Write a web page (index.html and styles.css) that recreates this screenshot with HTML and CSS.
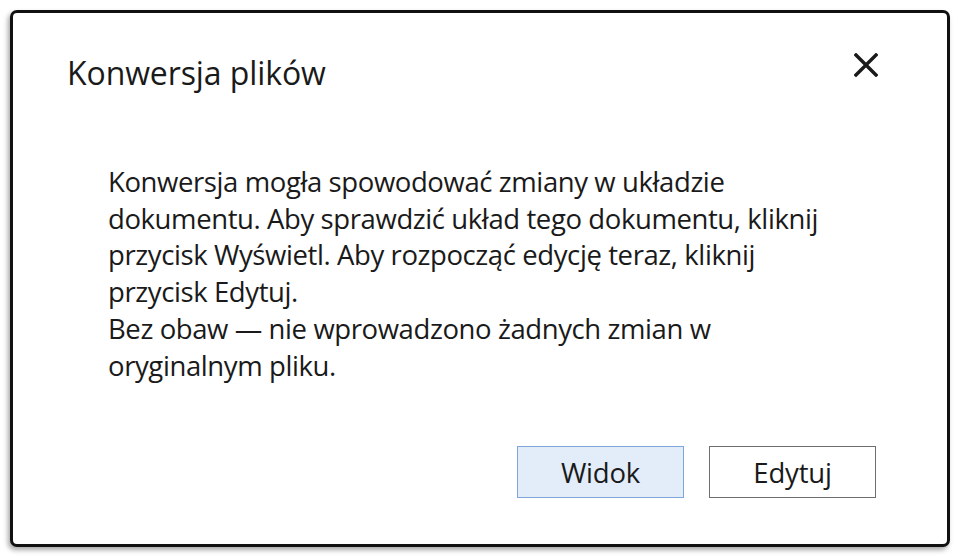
FILE: index.html
```html
<!DOCTYPE html>
<html lang="pl">
<head>
    <meta charset="utf-8">
    <title>Konwersja plików</title>
    <link rel="stylesheet" href="styles.css">
</head>
<body>
    <div class="dialog">
        <div class="dialog-header">
            <h1 class="dialog-title">Konwersja plików</h1>
            <button class="close-btn" aria-label="Zamknij">
                <svg width="24" height="24" viewBox="0 0 24 24">
                    <path d="M2 2 L22 22 M22 2 L2 22" stroke="#1a1a1a" stroke-width="3.4" stroke-linecap="square" fill="none"/>
                </svg>
            </button>
        </div>
        <p class="dialog-text">
            Konwersja mogła spowodować zmiany w układzie<br>
            dokumentu. Aby sprawdzić układ tego dokumentu, kliknij<br>
            przycisk Wyświetl. Aby rozpocząć edycję teraz, kliknij<br>
            przycisk Edytuj.<br>
            Bez obaw — nie wprowadzono żadnych zmian w<br>
            oryginalnym pliku.
        </p>
        <div class="dialog-footer">
            <button class="btn btn-primary">Widok</button>
            <button class="btn">Edytuj</button>
        </div>
    </div>
</body>
</html>
```

FILE: styles.css
```css
body {
    margin: 0;
    background: #ffffff;
    font-family: 'Open Sans', 'Noto Sans', sans-serif;
    color: #1a1a1a;
}

.dialog {
    box-sizing: border-box;
    width: 940px;
    height: 537px;
    margin: 10px;
    border: 3px solid #111;
    border-radius: 7px;
    background: #fff;
    box-shadow: -2px 3px 5px rgba(0, 0, 0, 0.35);
    display: flex;
    flex-direction: column;
    padding: 40px 71px 46px 54px;
}

.dialog-header {
    display: flex;
    justify-content: space-between;
    align-items: flex-start;
}

.dialog-title {
    margin: 0;
    font-size: 32px;
    font-weight: 400;
    line-height: 40px;
    letter-spacing: -0.1px;
}

.close-btn {
    border: none;
    background: none;
    padding: 0;
    margin-top: 0;
    margin-right: -2px;
    width: 24px;
    height: 24px;
    cursor: pointer;
}

.close-btn svg {
    display: block;
}

.dialog-text {
    margin: 71px 0 0 41px;
    font-size: 27.5px;
    line-height: 36.7px;
    letter-spacing: -0.4px;
}

.dialog-footer {
    margin-top: auto;
    display: flex;
    justify-content: flex-end;
    gap: 25px;
}

.btn {
    box-sizing: border-box;
    width: 167px;
    height: 52px;
    background: #fff;
    border: 1.5px solid #6e6e6e;
    font-family: inherit;
    font-size: 27.5px;
    letter-spacing: -0.2px;
    color: #1a1a1a;
    cursor: pointer;
}

.btn-primary {
    background: #e3ecf9;
    border-color: #7fa6d9;
}
```
